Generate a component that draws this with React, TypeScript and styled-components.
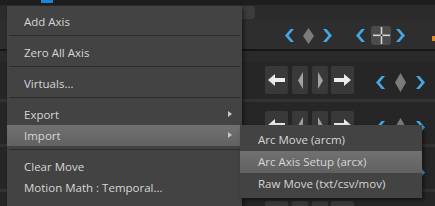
import React from "react";
import styled, { createGlobalStyle } from "styled-components";

const Global = createGlobalStyle`
  html, body { margin: 0; padding: 0; background: #262626; overflow: hidden; }
  #root { width: 435px; height: 206px; }
`;

const Screen = styled.div`
  position: relative;
  width: 435px;
  height: 206px;
  overflow: hidden;
  display: flex;
  flex-direction: column;
  background: #262626;
  font-family: "Open Sans", "Noto Sans", sans-serif;
`;

const TopStrip = styled.div`
  flex: none;
  height: 5px;
  background: #1e1e1e;
  display: flex;
`;

const BlueMark = styled.div`
  margin-left: 41px;
  width: 12px;
  height: 3px;
  background: #1c84d8;
`;

const TabRow = styled.div`
  flex: none;
  height: 14px;
  box-sizing: border-box;
  padding-top: 1px;
  background: #2b2b2b;
  display: flex;
`;

const TabBox = styled.div`
  margin-left: 60px;
  width: 195px;
  height: 13px;
  background: #3d3d3d;
  border-radius: 0 4px 4px 0;
`;

const ToolRow = styled.div`
  flex: none;
  height: 30px;
  box-sizing: border-box;
  padding-top: 3px;
  background: #2e2e2e;
  display: flex;
  align-items: center;
`;

const DarkLine = styled.div`
  flex: none;
  height: 2px;
  background: #161616;
`;

const Strip = styled.div`
  flex: none;
  height: 11px;
  background: #2a2a2a;
`;

const ButtonRow = styled.div`
  flex: none;
  height: 37px;
  box-sizing: border-box;
  padding-top: 4px;
  display: flex;
  align-items: flex-start;
`;

const Band = styled.div`
  flex: none;
  height: 3px;
  background: #323232;
`;

const RowGap = styled.div`
  flex: none;
  height: 5px;
`;

const Group = styled.div<{ $at: number; $gap: number; $top?: number }>`
  display: flex;
  align-items: center;
  margin-left: ${(p) => p.$at}px;
  margin-top: ${(p) => p.$top ?? 0}px;
  gap: ${(p) => p.$gap}px;
`;

const KeyButton = styled.div<{ $w: number }>`
  width: ${(p) => p.$w}px;
  height: 28px;
  background: #393939;
  border-radius: 2px;
  display: flex;
  align-items: center;
  justify-content: center;
`;

const CrossButton = styled.div`
  width: 20px;
  height: 19px;
  background: #4b4b4b;
  border-radius: 3px;
  display: flex;
  align-items: center;
  justify-content: center;
`;

const OrangeMark = styled.div`
  margin-left: 27px;
  width: 4px;
  height: 5px;
  margin-top: 6px;
  background: #e08a1e;
`;

const Menu = styled.div`
  position: absolute;
  left: 7px;
  top: 6px;
  width: 235px;
  padding: 5px 0 14px;
  background: #434343;
  box-shadow: 2px 2px 4px rgba(0, 0, 0, 0.45);
`;

const SubMenu = styled.div`
  position: absolute;
  left: 240px;
  top: 125px;
  width: 182px;
  padding: 4px 0 3px;
  background: #434343;
  box-shadow: 2px 2px 4px rgba(0, 0, 0, 0.5);
`;

const Item = styled.div<{ $active?: boolean; $h: number; $pad: number }>`
  position: relative;
  height: ${(p) => p.$h}px;
  line-height: ${(p) => p.$h}px;
  padding-left: ${(p) => p.$pad}px;
  font-size: 11.5px;
  color: #d6d6d6;
  white-space: nowrap;
  background: ${(p) => (p.$active ? "linear-gradient(#717171, #616161)" : "transparent")};
`;

const SubArrow = styled.span`
  position: absolute;
  right: 10px;
  top: 7px;
  width: 0;
  height: 0;
  border-left: 4px solid #c8c8c8;
  border-top: 3.5px solid transparent;
  border-bottom: 3.5px solid transparent;
`;

const Separator = styled.div`
  height: 1px;
  margin: 3px 2px 6px;
  background: #2c2c2c;
`;

const BLUE = "#45a6e8";

const ChevL = () => (
  <svg width="9" height="13" viewBox="0 0 9 13">
    <polygon points="9,0 3.6,6.5 9,13 5.6,13 0,6.5 5.6,0" fill={BLUE} />
  </svg>
);

const ChevR = () => (
  <svg width="9" height="13" viewBox="0 0 9 13">
    <polygon points="0,0 5.4,6.5 0,13 3.4,13 9,6.5 3.4,0" fill={BLUE} />
  </svg>
);

const Diamond = ({ w, h }: { w: number; h: number }) => (
  <svg width={w} height={h} viewBox={`0 0 ${w} ${h}`}>
    <polygon points={`${w / 2},0 ${w},${h / 2} ${w / 2},${h} 0,${h / 2}`} fill="#7b7b7b" />
  </svg>
);

const ArrowL = () => (
  <svg width="17" height="12" viewBox="0 0 17 12">
    <polygon points="0,6 7,0 7,4 17,4 17,8 7,8 7,12" fill="#ececec" />
  </svg>
);

const ArrowR = () => (
  <svg width="17" height="12" viewBox="0 0 17 12">
    <polygon points="17,6 10,0 10,4 0,4 0,8 10,8 10,12" fill="#ececec" />
  </svg>
);

const HalfL = () => (
  <svg width="5" height="17" viewBox="0 0 5 17">
    <polygon points="5,0 0,8.5 5,17" fill="#a2a2a2" />
  </svg>
);

const HalfR = () => (
  <svg width="5" height="17" viewBox="0 0 5 17">
    <polygon points="0,0 5,8.5 0,17" fill="#a2a2a2" />
  </svg>
);

const Cross = () => (
  <svg width="17" height="17" viewBox="0 0 17 17">
    <rect x="0" y="7.5" width="17" height="1.6" fill="#d2d2d2" />
    <rect x="7.7" y="0" width="1.6" height="17" fill="#d2d2d2" />
    <rect x="7.7" y="7.5" width="1.6" height="1.6" fill="#111" />
  </svg>
);

const KeyRow = () => (
  <ButtonRow>
    <Group $at={265} $gap={4}>
      <KeyButton $w={23}>
        <ArrowL />
      </KeyButton>
      <KeyButton $w={16}>
        <HalfL />
      </KeyButton>
      <KeyButton $w={16}>
        <HalfR />
      </KeyButton>
    </Group>
    <Group $at={3} $gap={0}>
      <KeyButton $w={23}>
        <ArrowR />
      </KeyButton>
    </Group>
    <Group $at={22} $gap={10} $top={7}>
      <ChevL />
      <Diamond w={11} h={19} />
      <ChevR />
    </Group>
  </ButtonRow>
);

const mainItems: Array<{ label?: string; sep?: boolean; sub?: boolean; active?: boolean }> = [
  { label: "Add Axis" },
  { sep: true },
  { label: "Zero All Axis" },
  { sep: true },
  { label: "Virtuals..." },
  { sep: true },
  { label: "Export", sub: true },
  { label: "Import", sub: true, active: true },
  { sep: true },
  { label: "Clear Move" },
  { label: "Motion Math : Temporal..." },
];

const subItems = [
  { label: "Arc Move (arcm)" },
  { label: "Arc Axis Setup (arcx)", active: true },
  { label: "Raw Move (txt/csv/mov)" },
];

export default function App() {
  return (
    <>
      <Global />
      <Screen>
        <TopStrip>
          <BlueMark />
        </TopStrip>
        <TabRow>
          <TabBox />
        </TabRow>
        <ToolRow>
          <Group $at={285} $gap={9}>
            <ChevL />
            <Diamond w={11} h={16} />
            <ChevR />
          </Group>
          <Group $at={24} $gap={6}>
            <ChevL />
            <CrossButton>
              <Cross />
            </CrossButton>
          </Group>
          <Group $at={5} $gap={0}>
            <ChevR />
          </Group>
          <OrangeMark />
        </ToolRow>
        <DarkLine />
        <Strip />
        <KeyRow />
        <Band />
        <RowGap />
        <KeyRow />
        <Band />
        <RowGap />
        <KeyRow />
        <Band />
        <RowGap />
        <KeyRow />

        <Menu>
          {mainItems.map((it, i) =>
            it.sep ? (
              <Separator key={i} />
            ) : (
              <Item key={i} $h={21} $pad={17} $active={it.active}>
                {it.label}
                {it.sub && <SubArrow />}
              </Item>
            )
          )}
        </Menu>
        <SubMenu>
          {subItems.map((it, i) => (
            <Item key={i} $h={22} $pad={18} $active={it.active}>
              {it.label}
            </Item>
          ))}
        </SubMenu>
      </Screen>
    </>
  );
}
